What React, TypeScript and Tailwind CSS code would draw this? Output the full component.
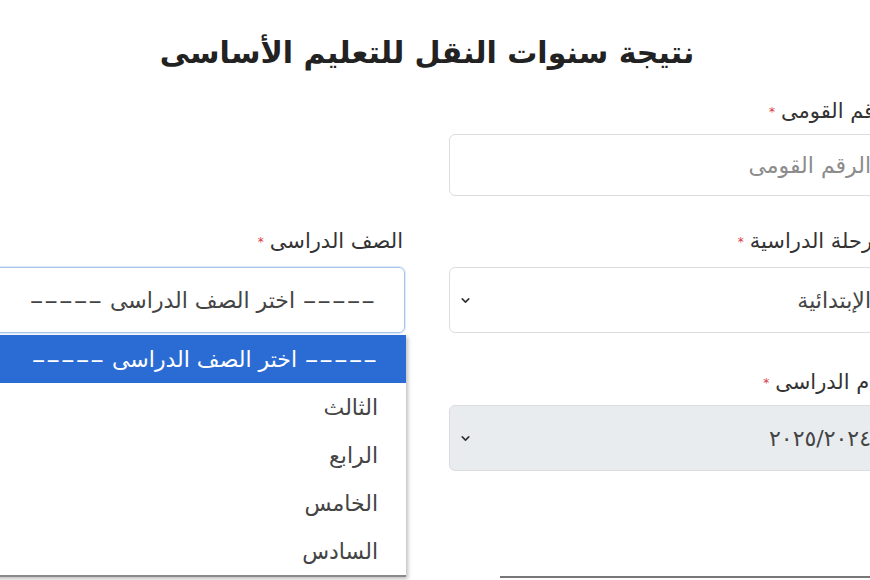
import { ChevronDown } from "lucide-react";

const grades = ["الثالث", "الرابع", "الخامس", "السادس"];

const Label = ({ text }: { text: string }) => (
  <div className="flex items-center gap-[6px] h-[28px] pr-[2px] text-[21px] text-[#333]">
    <span>{text}</span>
    <span className="text-[12px] text-[#d9363e] leading-none">*</span>
  </div>
);

// long thin dashes like the original select text
const Dashes = () => (
  <span className="inline-block w-[74px] text-center">
    <span className="inline-block scale-x-[1.85]">-----</span>
  </span>
);

const Placeholder = () => (
  <span>
    <Dashes /> اختر الصف الدراسى <Dashes />
  </span>
);

const App = () => {
  return (
    <div
      dir="rtl"
      className="relative w-[870px] h-[580px] overflow-hidden bg-white"
      style={{ fontFamily: '"DejaVu Sans", "Noto Sans Arabic", sans-serif' }}
    >
      <div className="w-[946px] -mr-[30px]">
        <h1 className="pt-[32px] h-[74px] leading-[42px] text-center text-[30px] font-bold text-[#222]">
          نتيجة سنوات النقل للتعليم الأساسى
        </h1>

        <div className="grid grid-cols-2 gap-x-[44px] mt-[24px]">
          {/* national id */}
          <Label text="الرقم القومى" />
          <div />
          <div className="mt-[8px] mb-[32px]">
            <div className="h-[62px] rounded-md border border-[#dcdcdc] flex items-center px-[28px] text-[22px] text-[#8c8c8c]">
              الرقم القومى
            </div>
          </div>
          <div />

          {/* stage / grade */}
          <Label text="المرحلة الدراسية" />
          <Label text="الصف الدراسى" />
          <div className="mt-[11px] mb-[36px]">
            <div className="h-[66px] rounded-md border border-[#dcdcdc] flex items-center justify-between pr-[28px] pl-[9px] text-[22px] text-[#444]">
              <span>الإبتدائية</span>
              <ChevronDown size={13} strokeWidth={3} className="text-[#333]" />
            </div>
          </div>
          <div className="relative mt-[11px] mb-[36px]">
            <div className="h-[66px] rounded-md border border-[#a8c6ec] flex items-center justify-between pr-[28px] pl-[10px] text-[22px] text-[#444] shadow-[0_0_0_1px_rgba(120,170,230,0.25)]">
              <Placeholder />
              <ChevronDown size={13} strokeWidth={3} className="text-[#333]" />
            </div>
            <div className="absolute top-[68px] right-[-1px] left-0 z-10 bg-white border-b-2 border-[#8a8a8a] shadow-[2px_2px_4px_rgba(0,0,0,0.25)] text-[22px] text-[#444]">
              <div className="h-[48px] flex items-center pr-[28px] bg-[#2b6cd4] text-white">
                <Placeholder />
              </div>
              {grades.map((g) => (
                <div key={g} className="h-[48px] flex items-center pr-[28px]">
                  {g}
                </div>
              ))}
            </div>
          </div>

          {/* year */}
          <Label text="العام الدراسى" />
          <div />
          <div className="mt-[8px]">
            <div className="h-[66px] rounded-md border border-[#dcdcdc] bg-[#e9ecef] flex items-center justify-between pr-[28px] pl-[9px] text-[22px] text-[#444]">
              <span>٢٠٢٥/٢٠٢٤</span>
              <ChevronDown size={13} strokeWidth={3} className="text-[#333]" />
            </div>
            <div className="mt-[105px] ml-[51px] border-t-2 border-[#777]" />
          </div>
          <div />
        </div>
      </div>
    </div>
  );
};

export default App;
